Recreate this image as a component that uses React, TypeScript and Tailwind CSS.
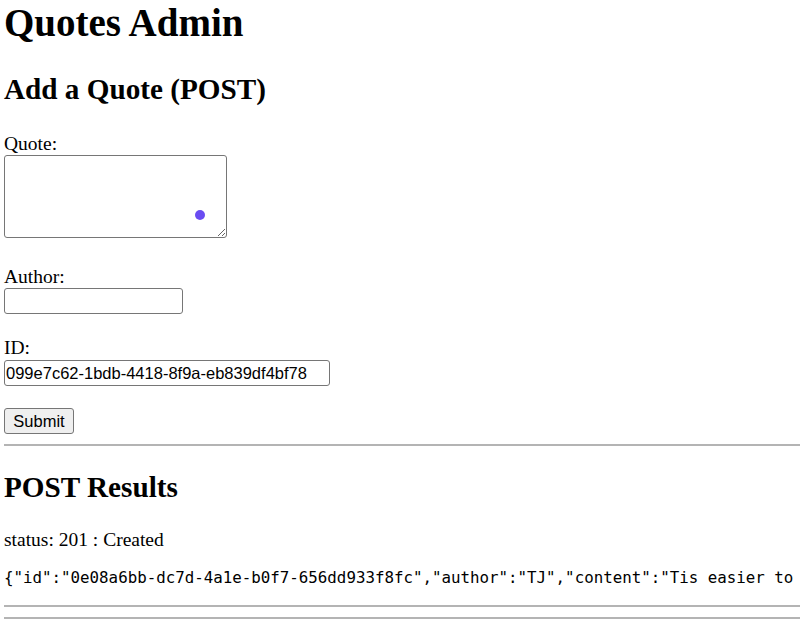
import React from "react";

export default function App() {
  const serif = { fontFamily: '"Liberation Serif", "Times New Roman", serif' };
  const sans = '"Liberation Sans", Arial, sans-serif';
  return (
    <div className="relative w-full h-[629px] overflow-hidden bg-white text-black pl-[4px]" style={serif}>
      <h1 className="m-0 text-[39px] leading-[46px] font-bold">Quotes Admin</h1>
      <h2 className="mt-[26px] text-[29.2px] leading-[35px] font-bold">Add a Quote (POST)</h2>
      <label className="block mt-[25px] text-[19.5px] leading-[23px]">Quote:</label>
      <textarea
        className="block w-[223px] h-[83px] border border-[#767676] rounded-[3px] bg-white"
        defaultValue=""
      />
      <label className="block mt-[27px] text-[19.5px] leading-[23px]">Author:</label>
      <input
        className="block w-[179px] h-[26px] border border-[#767676] rounded-[3px] bg-white"
        defaultValue=""
      />
      <label className="block mt-[22px] text-[19.5px] leading-[23px]">ID:</label>
      <input
        className="block mt-[1px] w-[326px] h-[26px] border border-[#767676] rounded-[3px] bg-white px-[1px] text-[16.5px] text-black"
        style={{ fontFamily: sans }}
        defaultValue="099e7c62-1bdb-4418-8f9a-eb839df4bf78"
      />
      <button
        className="block mt-[22px] w-[70px] h-[26px] border border-[#767676] rounded-[3px] bg-[#efefef] text-[16.5px] leading-[20px] text-black"
        style={{ fontFamily: sans }}
      >
        Submit
      </button>
      <div className="mt-[10px] h-[2px] bg-[#b4b4b4]" />
      <h2 className="mt-[24px] text-[29.2px] leading-[35px] font-bold">POST Results</h2>
      <p className="mt-[23px] text-[19.5px] leading-[23px]">status: 201 : Created</p>
      <pre
        className="mt-[17px] text-[15.8px] leading-[19px] whitespace-pre overflow-hidden"
        style={{ fontFamily: '"DejaVu Sans Mono", monospace' }}
      >
        {'{"id":"0e08a6bb-dc7d-4a1e-b0f7-656dd933f8fc","author":"TJ","content":"Tis easier to'}
      </pre>
      <div className="mt-[18px] h-[2px] bg-[#b4b4b4]" />
      <div className="mt-[10px] h-[2px] bg-[#b4b4b4]" />
      <div className="absolute left-[195px] top-[210px] w-[10px] h-[10px] rounded-full bg-[#6a4cf2]" />
    </div>
  );
}
